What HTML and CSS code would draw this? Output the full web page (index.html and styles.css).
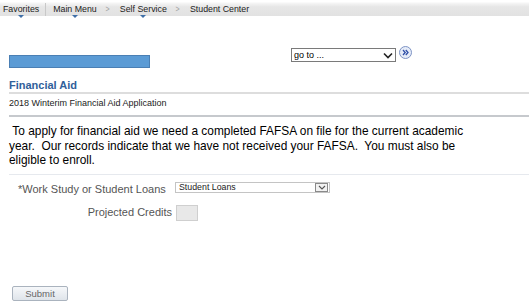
FILE: index.html
```html
<!DOCTYPE html>
<html lang="en">
<head>
    <meta charset="UTF-8">
    <title>Financial Aid</title>
    <link rel="stylesheet" href="styles.css">
</head>
<body>
    <div class="navbar">
        <span class="nav-item has-menu">Favorites</span>
        <span class="nav-sep"></span>
        <span class="nav-item has-menu">Main Menu</span>
        <span class="nav-arrow">&gt;</span>
        <span class="nav-item has-menu">Self Service</span>
        <span class="nav-arrow">&gt;</span>
        <span class="nav-item">Student Center</span>
    </div>

    <div class="top-row">
        <div class="name-bar"></div>
        <div class="goto">
            <div class="select goto-select">
                <span>go to ...</span>
                <svg class="chev" width="10" height="7" viewBox="0 0 10 7"><path d="M1 1.5 L5 5.5 L9 1.5" fill="none" stroke="#222" stroke-width="1.6"/></svg>
            </div>
            <span class="go-btn">
                <svg width="13" height="13" viewBox="0 0 13 13">
                    <circle cx="6.5" cy="6.5" r="6" fill="#e6ecf8" stroke="#7d93c4"/>
                    <path d="M4 4 L6.2 6.5 L4 9 M6.8 4 L9 6.5 L6.8 9" fill="none" stroke="#2f4fa8" stroke-width="1.3"/>
                </svg>
            </span>
        </div>
    </div>

    <div class="page">
        <h2 class="page-title">Financial Aid</h2>
        <div class="subtitle">2018 Winterim Financial Aid Application</div>

        <div class="notice-box">
            <p class="notice">&nbsp;To apply for financial aid we need a completed FAFSA on file for the current academic year.&nbsp; Our records indicate that we have not received your FAFSA.&nbsp; You must also be eligible to enroll.</p>
        </div>

        <div class="form">
            <div class="form-row first">
                <label class="lbl lbl-left">*Work Study or Student Loans</label>
                <div class="select loan-select">
                    <span>Student Loans</span>
                    <span class="drop">
                        <svg width="8" height="5" viewBox="0 0 8 5"><path d="M1 1 L4 4 L7 1" fill="none" stroke="#555" stroke-width="1.1"/></svg>
                    </span>
                </div>
            </div>
            <div class="form-row second">
                <label class="lbl">Projected Credits</label>
                <div class="credits"></div>
            </div>
        </div>

        <button class="submit-btn" type="button">Submit</button>
    </div>
</body>
</html>
```

FILE: styles.css
```css
body {
    margin: 0;
    font-family: "Liberation Sans", Arial, sans-serif;
    background: #ffffff;
    color: #000;
}

/* breadcrumb bar */
.navbar {
    margin-top: 2px;
    height: 14px;
    line-height: 13px;
    font-size: 8.8px;
    color: #222;
    background: linear-gradient(#f6f6f6, #e6e6e6 30%, #e2e2e2);
    border-top: 1px solid #fafafa;
    box-sizing: border-box;
    display: flex;
    align-items: stretch;
    padding-left: 3px;
}

.nav-item {
    position: relative;
}

.has-menu::after {
    content: "";
    position: absolute;
    left: 50%;
    bottom: -2px;
    margin-left: -3px;
    border-left: 3px solid transparent;
    border-right: 3px solid transparent;
    border-top: 3px solid #3f6fa8;
}

.nav-sep {
    width: 1px;
    background: #c8c8c8;
    margin: 0 7px 0 6px;
}

.nav-arrow {
    color: #a0a0a0;
    margin: 0 10px 0 8px;
    transform: scaleX(0.8);
}

/* name bar + go to */
.top-row {
    display: flex;
    align-items: flex-start;
    padding: 32px 0 0 9px;
}

.name-bar {
    width: 141px;
    height: 13px;
    margin-top: 7px;
    box-sizing: border-box;
    background: #5b9bd5;
    border: 1px solid #4a7fb4;
}

.goto {
    display: flex;
    align-items: flex-start;
    margin-left: 141px;
}

.select {
    display: flex;
    align-items: center;
    box-sizing: border-box;
    background: #fff;
    font-size: 9px;
    color: #000;
}

.goto-select {
    width: 105px;
    height: 14px;
    border: 1px solid #7a7a7a;
    padding-left: 2px;
    justify-content: space-between;
}

.goto-select .chev {
    margin-right: 2px;
}

.go-btn {
    display: flex;
    margin: -2px 0 0 3px;
}

/* page content */
.page {
    padding-left: 9px;
}

.page-title {
    margin: 11px 0 0;
    font-size: 11px;
    line-height: 13px;
    color: #30609a;
    border-bottom: 2px solid #dddddd;
}

.subtitle {
    margin-top: 3px;
    font-size: 9px;
    line-height: 12px;
    color: #222;
    padding-bottom: 6px;
    border-bottom: 2px solid #c6c9cd;
}

.notice-box {
    padding-bottom: 6px;
    border-bottom: 1px solid #e6e9ee;
}

.notice {
    width: 470px;
    margin: 7px 0 0;
    font-size: 11.9px;
    line-height: 14.5px;
    color: #000;
}

.form {
    padding-left: 9px;
    margin-top: 6px;
}

.form-row {
    display: flex;
    align-items: flex-start;
    height: 20px;
}

.form-row.first {
    height: 22px;
}

.lbl {
    width: 154px;
    padding-top: 2px;
    font-size: 11px;
    line-height: 13px;
    color: #555;
    text-align: right;
}

.lbl-left {
    text-align: left;
}

.loan-select {
    width: 155px;
    height: 11px;
    margin: 1px 0 0 3px;
    border: 1px solid #c4c4c4;
    padding-left: 3px;
    font-size: 8.8px;
    color: #222;
    justify-content: space-between;
}

.drop {
    display: flex;
    align-items: center;
    justify-content: center;
    width: 13px;
    height: 9px;
    border: 1px solid #8a8a8a;
    box-sizing: border-box;
    margin-right: 1px;
    background: #f2f2f2;
}

.second .lbl {
    padding-top: 3px;
}

.credits {
    width: 22px;
    height: 16px;
    margin: 2px 0 0 4px;
    box-sizing: border-box;
    background: #e8e8e8;
    border: 1px solid #cfcfcf;
}

.submit-btn {
    display: block;
    margin: 63px 0 0 3px;
    width: 56px;
    height: 15px;
    padding: 0;
    font-family: "Liberation Sans", Arial, sans-serif;
    font-size: 9.5px;
    color: #666;
    background: linear-gradient(#f6f8fa, #dfe4ea);
    border: 1px solid #aab3be;
    border-radius: 2px;
}
```
